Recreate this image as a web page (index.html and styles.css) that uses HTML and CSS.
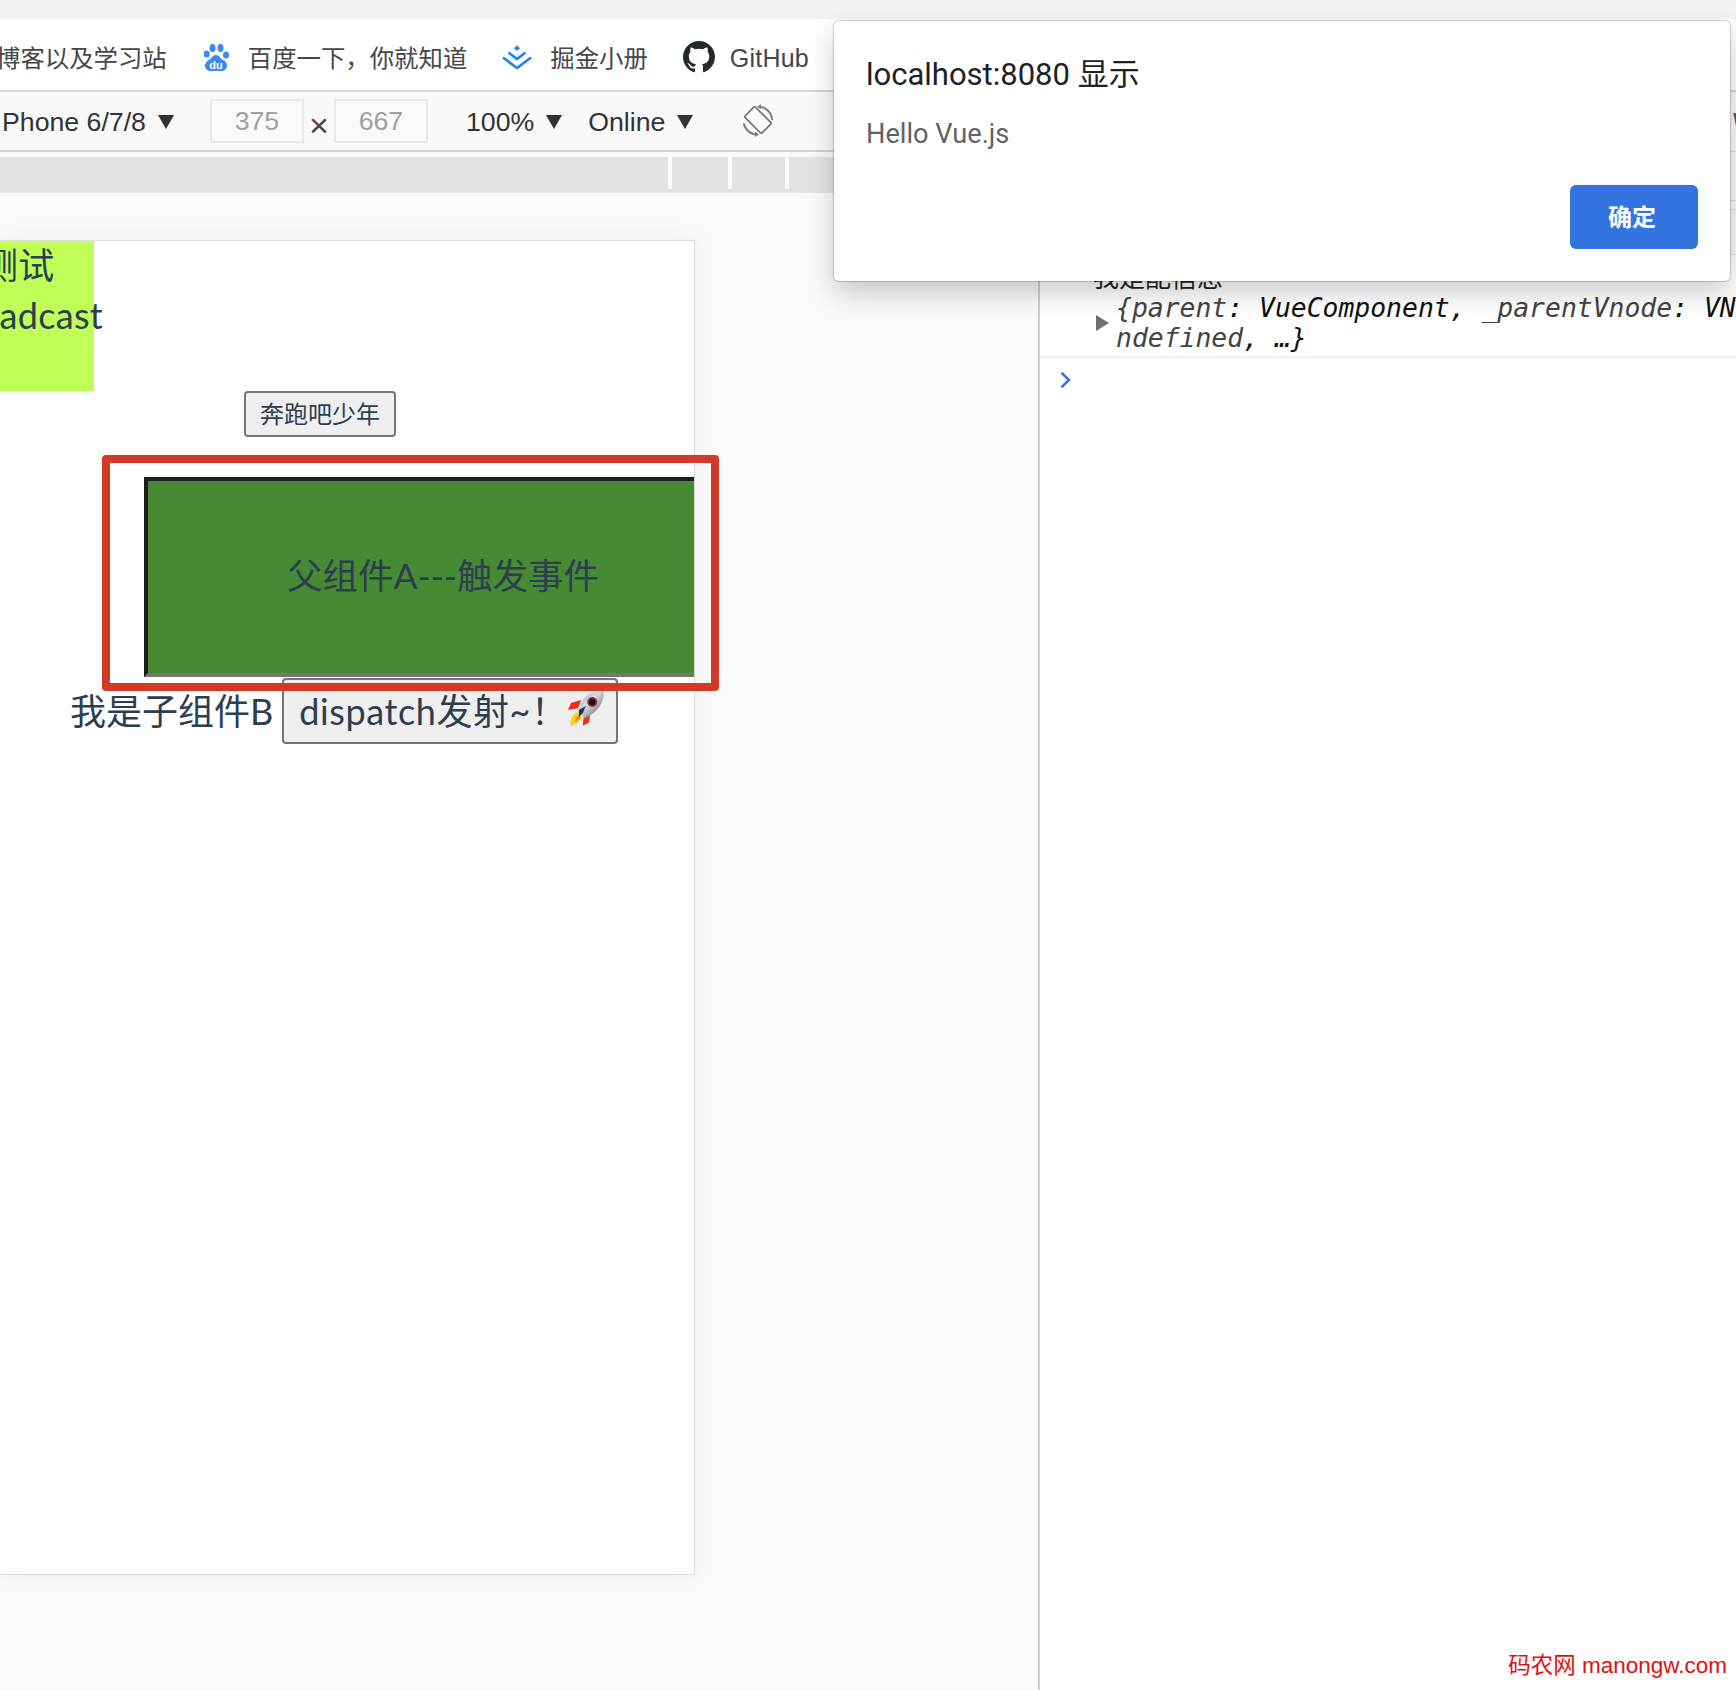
FILE: index.html
```html
<!DOCTYPE html>
<html lang="zh-CN">
<head>
<meta charset="utf-8">
<title>Vue dispatch demo</title>
<link rel="stylesheet" href="styles.css">
</head>
<body>
<div class="url-strip"><span class="url-text">localhost:8080/#/</span></div>
<nav class="bookmarks">
  <span class="bookmark"><span>博客以及学习站</span></span>
  <span class="bookmark">
    <svg class="icon-baidu" viewBox="0 0 28 28" aria-hidden="true">
      <ellipse cx="4.6" cy="11" rx="3" ry="3.6" fill="#3d86f5"/>
      <ellipse cx="10.5" cy="5" rx="3" ry="4" fill="#3d86f5"/>
      <ellipse cx="18.5" cy="5" rx="3" ry="4" fill="#3d86f5"/>
      <ellipse cx="24" cy="12" rx="3" ry="3.6" fill="#3d86f5"/>
      <path d="M14 12c3 0 4 3 6.500 4.500 3 1.800 4.500 3.500 4.500 6 0 3.500-3 5.500-6 5.500H9c-3.500 0-6-2-6-5.500 0-2.500 2-4.500 4.500-6C10 15 11 12 14 12z" fill="#3d86f5"/>
      <text x="14" y="26" class="baidu-du">du</text>
    </svg>
    <span>百度一下，你就知道</span>
  </span>
  <span class="bookmark">
    <svg class="icon-juejin" viewBox="0 0 30 24" aria-hidden="true">
      <path d="M15 0.500l3 2.800-3 2.800-3-2.800z" fill="#1e80ff"/>
      <path d="M6.500 7.500L15 14l8.500-6.500M1 12.500L15 23l14-10.500" fill="none" stroke="#1e80ff" stroke-width="2.600"/>
    </svg>
    <span>掘金小册</span>
  </span>
  <span class="bookmark bookmark-github">
    <svg class="icon-github" viewBox="0 0 16 16" aria-hidden="true"><path fill="#24292e" d="M8 0C3.580 0 0 3.580 0 8c0 3.540 2.290 6.530 5.470 7.590.4.070.55-.17.550-.38 0-.19-.010-.82-.010-1.490-2.010.370-2.530-.490-2.690-.940-.090-.230-.480-.940-.820-1.130-.280-.150-.680-.520-.010-.530.630-.010 1.080.580 1.230.820.720 1.210 1.870.870 2.330.660.070-.520.280-.870.510-1.070-1.780-.200-3.640-.890-3.640-3.950 0-.870.310-1.590.820-2.150-.080-.200-.360-1.020.080-2.120 0 0 .670-.210 2.200.820.640-.180 1.320-.270 2-.270s1.360.090 2 .270c1.530-1.040 2.200-.820 2.200-.820.440 1.100.160 1.920.080 2.120.510.560.820 1.270.820 2.150 0 3.070-1.870 3.750-3.650 3.950.290.250.540.730.540 1.480 0 1.070-.010 1.930-.010 2.200 0 .210.150.460.550.380A8.013 8.013 0 0 0 16 8c0-4.420-3.580-8-8-8z"/></svg>
    <span class="bookmark-latin">GitHub</span>
  </span>
</nav>
<main class="workspace">
  <section class="emulator">
    <div class="device-toolbar">
      <span class="tool-label">Phone 6/7/8</span><i class="caret"></i>
      <span class="size-box size-first">375</span>
      <span class="times">×</span>
      <span class="size-box">667</span>
      <span class="tool-label tool-zoom">100%</span><i class="caret"></i>
      <span class="tool-label tool-online">Online</span><i class="caret"></i>
      <svg class="icon-rotate" viewBox="0 0 32 32" aria-hidden="true">
        <rect x="8.700" y="4" width="14.600" height="24" rx="1.200" transform="rotate(-45 16 16)" fill="none" stroke="#777" stroke-width="1.700"/>
        <path d="M17 2.700A13.500 13.500 0 0 1 30 16M1.800 19.300A13.500 13.500 0 0 0 15.300 30.500" fill="none" stroke="#808080" stroke-width="2"/>
        <path d="M19 0l-4 2.700 4 2.500zM13 33l4-2.500-4-2.700z" fill="#808080"/>
      </svg>
    </div>
    <div class="ruler">
      <span class="ruler-seg ruler-seg-a"></span>
      <span class="ruler-seg ruler-seg-b"></span>
      <span class="ruler-seg ruler-seg-c"></span>
    </div>
    <div class="device-page">
      <div class="lime-box">
        <div class="lime-zh">测试</div>
        <div>Broadcast</div>
      </div>
      <div class="run-row"><button class="native-btn run-btn" type="button">奔跑吧少年</button></div>
      <div class="parent-box">父组件A---触发事件</div>
      <div class="child-row">
        <span>我是子组件B</span>
        <button class="native-btn dispatch-btn" type="button">
          <span class="dispatch-label">dispatch发射~！</span>
          <svg class="icon-rocket" viewBox="0 0 37 36" aria-hidden="true">
            <defs>
              <linearGradient id="rocketBody" x1="0" y1="0" x2="1" y2="1">
                <stop offset="0" stop-color="#6fa8dc"/>
                <stop offset="0.45" stop-color="#d5dde3"/>
                <stop offset="1" stop-color="#3f5361"/>
              </linearGradient>
            </defs>
            <path d="M3 36c-2-6 1-11 6-14l5 5c-2 5-6 8-11 9z" fill="#f8d22c"/>
            <path d="M7 32c0-3 2-6 4-7l2 2c-1 2-3 4-6 5z" fill="#f58a1f"/>
            <path d="M13 10L3 13l-3 7 11-2z" fill="#e8301c"/>
            <path d="M23 22l-2 11-6 3 1-11z" fill="#e8301c"/>
            <path d="M36 0c-10 0-18 4-24 14l-3 6 8 8 6-3C32 19 37 10 36 0z" fill="url(#rocketBody)"/>
            <circle cx="24.500" cy="12" r="5" fill="#a8261e"/>
            <circle cx="24.500" cy="12" r="3.200" fill="#111"/>
            <path d="M11 20l7-4-3 7-4 4z" fill="#29323a"/>
          </svg>
        </button>
      </div>
    </div>
  </section>
  <aside class="devtools">
    <div class="dev-row dev-row-tabs"><span class="dev-clipped">V</span></div>
    <div class="dev-row dev-row-b"></div>
    <div class="dev-row dev-row-c"></div>
    <div class="dev-row dev-row-d"></div>
    <div class="console-msg">
      <div class="console-log">我是配信息</div>
      <div class="console-obj">
        <i class="obj-arrow"></i>
        <div class="obj-lines">
          <div><span class="obj-key">{parent</span>: VueComponent, <span class="obj-key">_parentVnode</span>: VNode, $slots: {…}, $scopedSlots: {…}</div>
          <div><span class="obj-key">ndefined</span>, …}</div>
        </div>
      </div>
    </div>
    <div class="console-prompt">
      <svg class="icon-prompt" viewBox="0 0 12 16" aria-hidden="true"><path d="M3 1.500L9.500 8 3 14.500" fill="none" stroke="#3e78e0" stroke-width="2.400"/></svg>
    </div>
  </aside>
</main>
<div class="annotation"></div>
<div class="dialog" role="alertdialog">
  <div class="dialog-title">localhost:8080 显示</div>
  <div class="dialog-body">Hello Vue.js</div>
  <div class="dialog-actions"><button class="dialog-ok" type="button">确定</button></div>
</div>
<div class="watermark">码农网 manongw.com</div>
</body>
</html>
```
FILE: styles.css
```css
* { box-sizing: border-box; }
html, body { margin: 0; padding: 0; }
body {
  width: 1736px;
  height: 1690px;
  overflow: hidden;
  position: relative;
  background: #fff;
  font-family: "Liberation Sans", "Noto Sans CJK SC", sans-serif;
}

.url-strip {
  height: 19px;
  background: #f1f3f4;
  overflow: hidden;
}
.url-text {
  display: block;
  margin: -25px 0 0 -92px;
  font: 26px/30px "Liberation Sans", sans-serif;
  color: #5f6368;
}

.bookmarks {
  height: 73px;
  padding-top: 4px;
  display: flex;
  align-items: center;
  gap: 35px;
  margin-left: -4px;
  background: #fff;
  border-bottom: 2px solid #d6d6da;
  overflow: hidden;
  font-size: 24.4px;
  color: #45474a;
  white-space: nowrap;
}
.bookmark { display: flex; align-items: center; gap: 18px; }
.bookmark-github { gap: 15px; }
.bookmark-latin { font-size: 25px; letter-spacing: .2px; padding-top: 3px; }
.icon-baidu { width: 28px; height: 28px; }
.baidu-du {
  font: bold 11px "Liberation Sans", sans-serif;
  fill: #fff;
  text-anchor: middle;
}
.icon-juejin { width: 30px; height: 24px; }
.icon-github { width: 32px; height: 32px; }

.workspace { display: flex; height: 1598px; }
.emulator { width: 1038px; background: #fafafa; overflow: hidden; flex: none; }

.device-toolbar {
  height: 60px;
  padding: 2px 0 0 2px;
  display: flex;
  align-items: center;
  background: #f9f9f9;
  border-bottom: 2px solid #d0d0d0;
  color: #333;
  font-size: 26.7px;
  white-space: nowrap;
}
.tool-zoom { margin-left: 38px; }
.tool-online { margin-left: 26px; }
.caret {
  width: 0;
  height: 0;
  margin-left: 12px;
  border-left: 8px solid transparent;
  border-right: 8px solid transparent;
  border-top: 14px solid #333;
}
.size-box {
  width: 94px;
  height: 44px;
  margin-top: -2px;
  display: flex;
  align-items: center;
  justify-content: center;
  background: #fafafa;
  border: 2px solid #e9e9e9;
  color: #a0a0a0;
}
.size-first { margin-left: 36px; }
.times { width: 30px; text-align: center; font-size: 34px; line-height: 44px; margin-top: 6px; color: #444; }
.icon-rotate { width: 32px; height: 32px; margin: -4px 0 0 49px; overflow: visible; }

.ruler {
  height: 36px;
  margin-top: 5px;
  display: flex;
  align-items: flex-start;
  background: #e3e3e3;
}
.ruler-seg { display: block; height: 32px; border-right: 4px solid #fbfbfb; }
.ruler-seg-a { width: 672px; }
.ruler-seg-b { width: 60px; }
.ruler-seg-c { width: 57px; }

.device-page {
  width: 695px;
  height: 1335px;
  margin-top: 47px;
  background: #fff;
  border: 1px solid #dcdcdc;
  border-left: 0;
  box-shadow: 0 0 24px rgba(0, 0, 0, .05);
  overflow: hidden;
  color: #2c3e50;
  font-family: Lato, "Noto Sans CJK SC", sans-serif;
  font-size: 36px;
  font-weight: 400;
  line-height: 50px;
}
.lime-box {
  width: 151px;
  height: 150px;
  margin-left: -57px;
  background: #bfff57;
  white-space: nowrap;
  letter-spacing: .3px;
}
.lime-zh { padding-left: 39px; }
.lime-box > div { position: relative; top: -1px; }

.run-row { display: flex; padding-left: 244px; }
.native-btn {
  background: #efefef;
  border: 2px solid #767676;
  border-radius: 4px;
  color: #2c3e50;
  font-family: Lato, "Noto Sans CJK SC", sans-serif;
  font-weight: 400;
}
.run-btn {
  width: 152px;
  height: 46px;
  padding: 0;
  font-size: 24px;
  line-height: 30px;
  font-weight: 400;
}

.parent-box {
  width: 598px;
  height: 200px;
  margin: 40px 0 0 144px;
  padding-bottom: 2px;
  display: flex;
  align-items: center;
  justify-content: center;
  background: #468a34;
  border: 4px solid;
  border-color: #1d1d1d #767676 #767676 #1d1d1d;
  font-size: 35.500px;
}

.child-row {
  display: flex;
  align-items: flex-start;
  margin-top: 1px;
  padding-left: 70px;
  line-height: 66px;
  white-space: nowrap;
}
.dispatch-btn {
  width: 336px;
  height: 66px;
  margin-left: 9px;
  padding: 0 12px 0 15px;
  display: flex;
  align-items: center;
  justify-content: space-between;
  font-size: 36px;
  line-height: 50px;
}
.dispatch-label { letter-spacing: .6px; }
.icon-rocket { width: 37px; height: 36px; margin-top: -6px; }

.devtools {
  flex: 1;
  min-width: 0;
  background: #fff;
  border-left: 2px solid #cfcfcf;
  overflow: hidden;
  color: #222;
}
.dev-row { border-bottom: 1px solid #dedede; background: #f8f8f8; }
.dev-row-tabs { height: 60px; padding-left: 691px; font-size: 26px; line-height: 60px; color: #555; overflow: hidden; }
.dev-clipped { font-style: italic; }
.dev-row-b { height: 49px; }
.dev-row-c { height: 9px; }
.dev-row-d { height: 45px; }

.console-msg {
  height: 103px;
  padding-top: 8px;
  border-bottom: 2px solid #efefef;
}
.console-log {
  padding-left: 53px;
  font-size: 26px;
  line-height: 30px;
  white-space: nowrap;
}
.console-obj { display: flex; align-items: center; padding-left: 56px; }
.obj-arrow {
  width: 0;
  height: 0;
  margin-right: 7px;
  flex: none;
  border-top: 8px solid transparent;
  border-bottom: 8px solid transparent;
  border-left: 13px solid #6e6e6e;
}
.obj-lines {
  font: italic 26.400px/30px "DejaVu Sans Mono", monospace;
  white-space: nowrap;
  color: #111;
}
.obj-key { color: #444; }
.console-prompt { padding: 13px 0 0 18px; }
.icon-prompt { display: block; width: 14px; height: 18px; }

.annotation {
  position: absolute;
  left: 102px;
  top: 455px;
  width: 617px;
  height: 236px;
  border: 8px solid #d33a26;
  border-radius: 4px;
  pointer-events: none;
}

.dialog {
  position: absolute;
  left: 834px;
  top: 21px;
  width: 896px;
  height: 260px;
  padding: 34px 32px 32px;
  display: flex;
  flex-direction: column;
  background: #fff;
  border-radius: 5px;
  box-shadow: 0 0 1px 1px rgba(0, 0, 0, .18), 0 12px 28px rgba(0, 0, 0, .2);
  font-family: Roboto, "Noto Sans CJK SC", sans-serif;
}
.dialog-title { font-size: 31px; line-height: 40px; color: #202124; white-space: nowrap; }
.dialog-body { margin-top: 19px; font-size: 27.200px; line-height: 40px; color: #5f6368; }
.dialog-actions { margin-top: auto; display: flex; justify-content: flex-end; }
.dialog-ok {
  width: 128px;
  height: 64px;
  padding: 0 4px 4px 0;
  border: 0;
  border-radius: 6px;
  background: #3374e0;
  color: #fff;
  font: 700 24px Roboto, "Noto Sans CJK SC", sans-serif;
}

.watermark {
  position: absolute;
  right: 9px;
  top: 1651px;
  font: 22.500px/30px "Liberation Sans", "Noto Sans CJK SC", sans-serif;
  color: #e01010;
  white-space: nowrap;
}
```
